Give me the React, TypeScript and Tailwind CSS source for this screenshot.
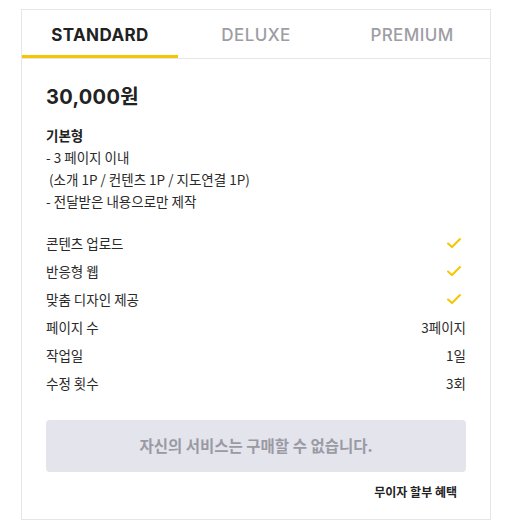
const tabs = ["STANDARD", "DELUXE", "PREMIUM"];

const rows: { label: string; value?: string }[] = [
  { label: "콘텐츠 업로드" },
  { label: "반응형 웹" },
  { label: "맞춤 디자인 제공" },
  { label: "페이지 수", value: "3페이지" },
  { label: "작업일", value: "1일" },
  { label: "수정 횟수", value: "3회" },
];

const kr = "font-['Noto_Sans_CJK_KR','Noto_Sans',sans-serif]";

function Check() {
  return (
    <svg width="16" height="12" viewBox="0 0 16 12" fill="none">
      <path
        d="M2 6.5l4 3.5 8-8"
        stroke="#f7c600"
        strokeWidth="2"
        strokeLinecap="round"
        strokeLinejoin="round"
      />
    </svg>
  );
}

export default function App() {
  return (
    <div className="min-h-screen bg-white pt-[9px] pl-[21px]">
      <div className="w-[470px] border border-[#e6e6e6] bg-white">
        {/* Tabs */}
        <div className="grid grid-cols-3 border-b border-[#e6e6e6]">
          {tabs.map((t, i) => (
            <div
              key={t}
              className={
                "h-[48px] pt-[6px] flex items-center justify-center border-b-[3px] font-['Inter',sans-serif] text-[17px] tracking-[0.4px] " +
                (i === 0
                  ? "font-bold text-[#222] border-[#f7c600]"
                  : "font-medium text-[#9d9da4] border-transparent")
              }
            >
              {t}
            </div>
          ))}
        </div>

        {/* Body */}
        <div className={`px-6 pt-6 pb-[17px] ${kr} text-[#2a2a2a]`}>
          <div className="font-['Inter','Noto_Sans_CJK_KR',sans-serif] text-[20px] leading-[28px] font-bold text-[#222] tracking-[0.3px]">
            30,000원
          </div>

          <div className="mt-[13px] text-[13.5px] leading-[22px]">
            <div className="font-bold text-[#222]">기본형</div>
            <div>- 3 페이지 이내</div>
            <div>&nbsp;(소개 1P / 컨텐츠 1P / 지도연결 1P)</div>
            <div>- 전달받은 내용으로만 제작</div>
          </div>

          <div className="mt-[17px] text-[13.5px]">
            {rows.map((r) => (
              <div key={r.label} className="h-[28px] flex items-center justify-between">
                <span>{r.label}</span>
                {r.value ? (
                  <span>{r.value}</span>
                ) : (
                  <span className="pr-[4px]">
                    <Check />
                  </span>
                )}
              </div>
            ))}
          </div>

          <button className="mt-[23px] w-full h-[52px] rounded-[4px] bg-[#e4e4ec] text-[#9a9aa5] text-[15.5px] font-bold">
            자신의 서비스는 구매할 수 없습니다.
          </button>

          <div className="mt-[10px] text-right text-[12px] leading-[20px] font-bold text-[#222] pr-[9px]">
            무이자 할부 혜택
          </div>
        </div>
      </div>
    </div>
  );
}
